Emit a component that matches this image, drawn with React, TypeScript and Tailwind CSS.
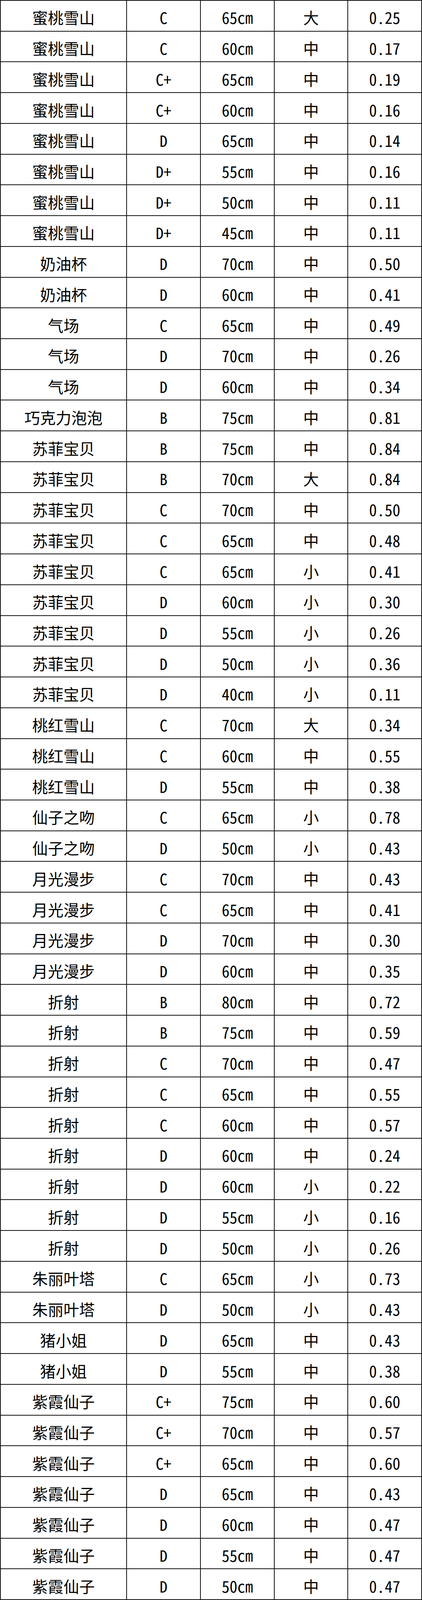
import React from "react"

type Row = [string, string, string, string, string]

const rows: Row[] = [
  ["蜜桃雪山", "C", "65cm", "大", "0.25"],
  ["蜜桃雪山", "C", "60cm", "中", "0.17"],
  ["蜜桃雪山", "C+", "65cm", "中", "0.19"],
  ["蜜桃雪山", "C+", "60cm", "中", "0.16"],
  ["蜜桃雪山", "D", "65cm", "中", "0.14"],
  ["蜜桃雪山", "D+", "55cm", "中", "0.16"],
  ["蜜桃雪山", "D+", "50cm", "中", "0.11"],
  ["蜜桃雪山", "D+", "45cm", "中", "0.11"],
  ["奶油杯", "D", "70cm", "中", "0.50"],
  ["奶油杯", "D", "60cm", "中", "0.41"],
  ["气场", "C", "65cm", "中", "0.49"],
  ["气场", "D", "70cm", "中", "0.26"],
  ["气场", "D", "60cm", "中", "0.34"],
  ["巧克力泡泡", "B", "75cm", "中", "0.81"],
  ["苏菲宝贝", "B", "75cm", "中", "0.84"],
  ["苏菲宝贝", "B", "70cm", "大", "0.84"],
  ["苏菲宝贝", "C", "70cm", "中", "0.50"],
  ["苏菲宝贝", "C", "65cm", "中", "0.48"],
  ["苏菲宝贝", "C", "65cm", "小", "0.41"],
  ["苏菲宝贝", "D", "60cm", "小", "0.30"],
  ["苏菲宝贝", "D", "55cm", "小", "0.26"],
  ["苏菲宝贝", "D", "50cm", "小", "0.36"],
  ["苏菲宝贝", "D", "40cm", "小", "0.11"],
  ["桃红雪山", "C", "70cm", "大", "0.34"],
  ["桃红雪山", "C", "60cm", "中", "0.55"],
  ["桃红雪山", "D", "55cm", "中", "0.38"],
  ["仙子之吻", "C", "65cm", "小", "0.78"],
  ["仙子之吻", "D", "50cm", "小", "0.43"],
  ["月光漫步", "C", "70cm", "中", "0.43"],
  ["月光漫步", "C", "65cm", "中", "0.41"],
  ["月光漫步", "D", "70cm", "中", "0.30"],
  ["月光漫步", "D", "60cm", "中", "0.35"],
  ["折射", "B", "80cm", "中", "0.72"],
  ["折射", "B", "75cm", "中", "0.59"],
  ["折射", "C", "70cm", "中", "0.47"],
  ["折射", "C", "65cm", "中", "0.55"],
  ["折射", "C", "60cm", "中", "0.57"],
  ["折射", "D", "60cm", "中", "0.24"],
  ["折射", "D", "60cm", "小", "0.22"],
  ["折射", "D", "55cm", "小", "0.16"],
  ["折射", "D", "50cm", "小", "0.26"],
  ["朱丽叶塔", "C", "65cm", "小", "0.73"],
  ["朱丽叶塔", "D", "50cm", "小", "0.43"],
  ["猪小姐", "D", "65cm", "中", "0.43"],
  ["猪小姐", "D", "55cm", "中", "0.38"],
  ["紫霞仙子", "C+", "75cm", "中", "0.60"],
  ["紫霞仙子", "C+", "70cm", "中", "0.57"],
  ["紫霞仙子", "C+", "65cm", "中", "0.60"],
  ["紫霞仙子", "D", "65cm", "中", "0.43"],
  ["紫霞仙子", "D", "60cm", "中", "0.47"],
  ["紫霞仙子", "D", "55cm", "中", "0.47"],
  ["紫霞仙子", "D", "50cm", "中", "0.47"],
]

function Cell({ children }: { children: React.ReactNode }) {
  return (
    <div className="min-h-0 border-r-2 border-b-2 border-[#111] flex items-center justify-center pt-[8px] whitespace-nowrap overflow-hidden">
      {children}
    </div>
  )
}

export default function App() {
  return (
    <div className="w-[1080px] h-screen overflow-hidden bg-white text-black text-[40px] leading-none font-['Noto_Sans_CJK_SC',sans-serif] [font-feature-settings:'hwid']">
      <div className="h-full grid grid-cols-[323px_189px_189px_188px_189px] grid-rows-[repeat(52,minmax(0,1fr))] border-t-2 border-l-2 border-[#111]">
        {rows.map((r, i) => (
          <React.Fragment key={i}>
            {r.map((v, j) => (
              <Cell key={j}>{v}</Cell>
            ))}
          </React.Fragment>
        ))}
      </div>
    </div>
  )
}
